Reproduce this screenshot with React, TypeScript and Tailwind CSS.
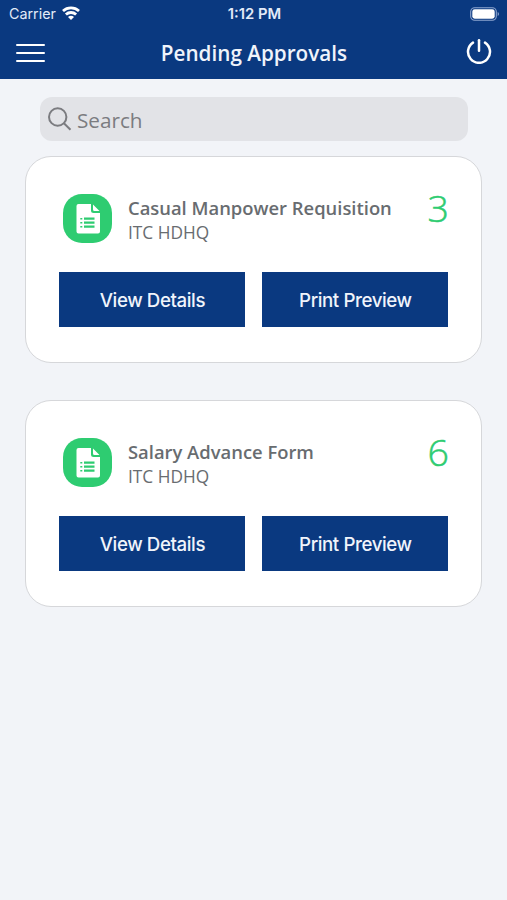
import React, { useState } from 'react';

interface Approval {
  id: number;
  title: string;
  company: string;
  count: number;
}

const approvals: Approval[] = [
  { id: 1, title: 'Casual Manpower Requisition', company: 'ITC HDHQ', count: 3 },
  { id: 2, title: 'Salary Advance Form', company: 'ITC HDHQ', count: 6 },
];

const StatusBar: React.FC = () => (
  <div className="grid h-[27px] grid-cols-3 items-center pl-[9px] pr-[7px] font-['Inter',sans-serif] leading-none text-[#e3ebf8]">
    <div className="flex items-center gap-[6px]">
      <span className="pt-px text-[14.3px]">Carrier</span>
      <svg className="mb-[2px] h-[14px] w-[18px]" viewBox="0 0 18 14" fill="none" stroke="#fff" strokeWidth="2.8">
        <path d="M1 5C5.500.9 12.500.9 17 5" />
        <path d="M3.900 8.500c2.900-2.700 7.300-2.700 10.200 0" />
        <path d="M9 14 6 11c1.700-1.600 4.300-1.600 6 0z" fill="#fff" stroke="none" />
      </svg>
    </div>
    <span className="pt-px text-center text-[14.8px] font-semibold">1:12 PM</span>
    <svg className="h-[14px] w-[30px] justify-self-end" viewBox="0 0 30 14" fill="none">
      <rect x="0.700" y="0.700" width="25.600" height="12.600" rx="4" stroke="#8fa6cf" strokeWidth="1.100" />
      <rect x="2.300" y="2.300" width="22.400" height="9.400" rx="2.400" fill="#fff" />
      <path d="M27.700 5v4c1.700-.7 1.700-3.300 0-4z" fill="#8fa6cf" />
    </svg>
  </div>
);

const Header: React.FC = () => (
  <header className="h-[79px] bg-[#0a3980]">
    <StatusBar />
    <div className="grid h-[52px] grid-cols-[1fr_auto_1fr] items-center pl-[16px] pr-[15px]">
      <button type="button" aria-label="Menu" className="flex w-[29px] flex-col gap-[6px]">
        <span className="h-[2px] rounded-full bg-white" />
        <span className="h-[2px] rounded-full bg-white" />
        <span className="h-[2px] rounded-full bg-white" />
      </button>
      <h1 className="text-[20.700px] font-semibold leading-none text-[#f0f4fb]">Pending Approvals</h1>
      <button type="button" aria-label="Log out" className="mb-[4px] justify-self-end">
        <svg className="h-[26px] w-[26px]" viewBox="0 0 26 26" fill="none" stroke="#fff" strokeWidth="2.500" strokeLinecap="round">
          <path d="M7 4.600a11 11 0 1 0 12 0" />
          <path d="M13 2.200v10.600" />
        </svg>
      </button>
    </div>
  </header>
);

const FormIcon: React.FC = () => (
  <div className="flex h-[49px] w-[49px] shrink-0 items-center justify-center rounded-[19px] bg-[#2ecc71]">
    <svg className="ml-[2px] h-[30px] w-[25px]" viewBox="0 0 25 30">
      <path d="M2.500 0H15v6.500A2.500 2.500 0 0 0 17.500 9H24v18.500a2 2 0 0 1-2 2H2.500a2 2 0 0 1-2-2V2a2 2 0 0 1 2-2z" fill="#fff" />
      <path d="M17 0.500l6.500 6.500h-5A1.500 1.500 0 0 1 17 5.500z" fill="#fff" />
      <path d="M8 14.700h10.500M8 18.700h10.500M8 22.700h10.500" stroke="#2ecc71" strokeWidth="2.200" />
      <path d="M4.300 14.700h2M4.300 18.700h2M4.300 22.700h2" stroke="#2ecc71" strokeWidth="1.600" />
    </svg>
  </div>
);

const ActionButton: React.FC<{ label: string }> = ({ label }) => (
  <button
    type="button"
    className="h-[55px] w-[186px] bg-[#0a3980] pt-[3px] font-['Inter',sans-serif] text-[18.700px] font-medium tracking-[-0.4px] text-[#f0f4fb]"
  >
    {label}
  </button>
);

const ApprovalCard: React.FC<{ approval: Approval }> = ({ approval }) => (
  <article className="h-[207px] rounded-[26px] border border-[#d6d7da] bg-white pl-[33.400px] pr-[32px] pt-[37px]">
    <div className="flex pl-[3.600px]">
      <FormIcon />
      <div className="ml-4 flex-1 pt-px text-[#686c70]">
        <h2 className="text-[18.400px] font-semibold leading-[25px]">{approval.title}</h2>
        <p className="text-[17.300px] leading-[25px]">{approval.company}</p>
      </div>
      <span className="h-[49px] text-[37.500px] font-light leading-[28px] text-[#2ecc71] [-webkit-text-stroke:0.5px_#2ecc71]">
        {approval.count}
      </span>
    </div>
    <div className="mt-[27px] flex gap-[17px]">
      <ActionButton label="View Details" />
      <ActionButton label="Print Preview" />
    </div>
  </article>
);

const App: React.FC = () => {
  const [query, setQuery] = useState<string>('');

  const visible = approvals.filter((a) => a.title.toLowerCase().includes(query.toLowerCase()));

  return (
    <div className="min-h-screen bg-[#f2f4f8] font-['Open_Sans',sans-serif]">
      <Header />
      <main className="pt-[18px]">
        <label className="ml-[40px] mr-[39px] flex h-[44px] items-center gap-[5px] rounded-[12px] bg-[#e2e3e7] pl-[8px]">
          <svg className="h-[24px] w-[24px] shrink-0" viewBox="0 0 24 24" fill="none" stroke="#7b7c80" strokeWidth="2">
            <circle cx="9.700" cy="10" r="8.700" />
            <path d="M15.900 16.200l6.600 6.600" />
          </svg>
          <input
            type="text"
            value={query}
            onChange={(e) => setQuery(e.target.value)}
            placeholder="Search"
            className="w-full bg-transparent pt-[3px] text-[20.700px] text-[#686c70] outline-none placeholder:text-[#7b7c80]"
          />
        </label>
        <div className="mx-[25px] mt-[15px] flex flex-col gap-[37px]">
          {visible.map((approval) => (
            <ApprovalCard key={approval.id} approval={approval} />
          ))}
        </div>
      </main>
    </div>
  );
};

export default App;
